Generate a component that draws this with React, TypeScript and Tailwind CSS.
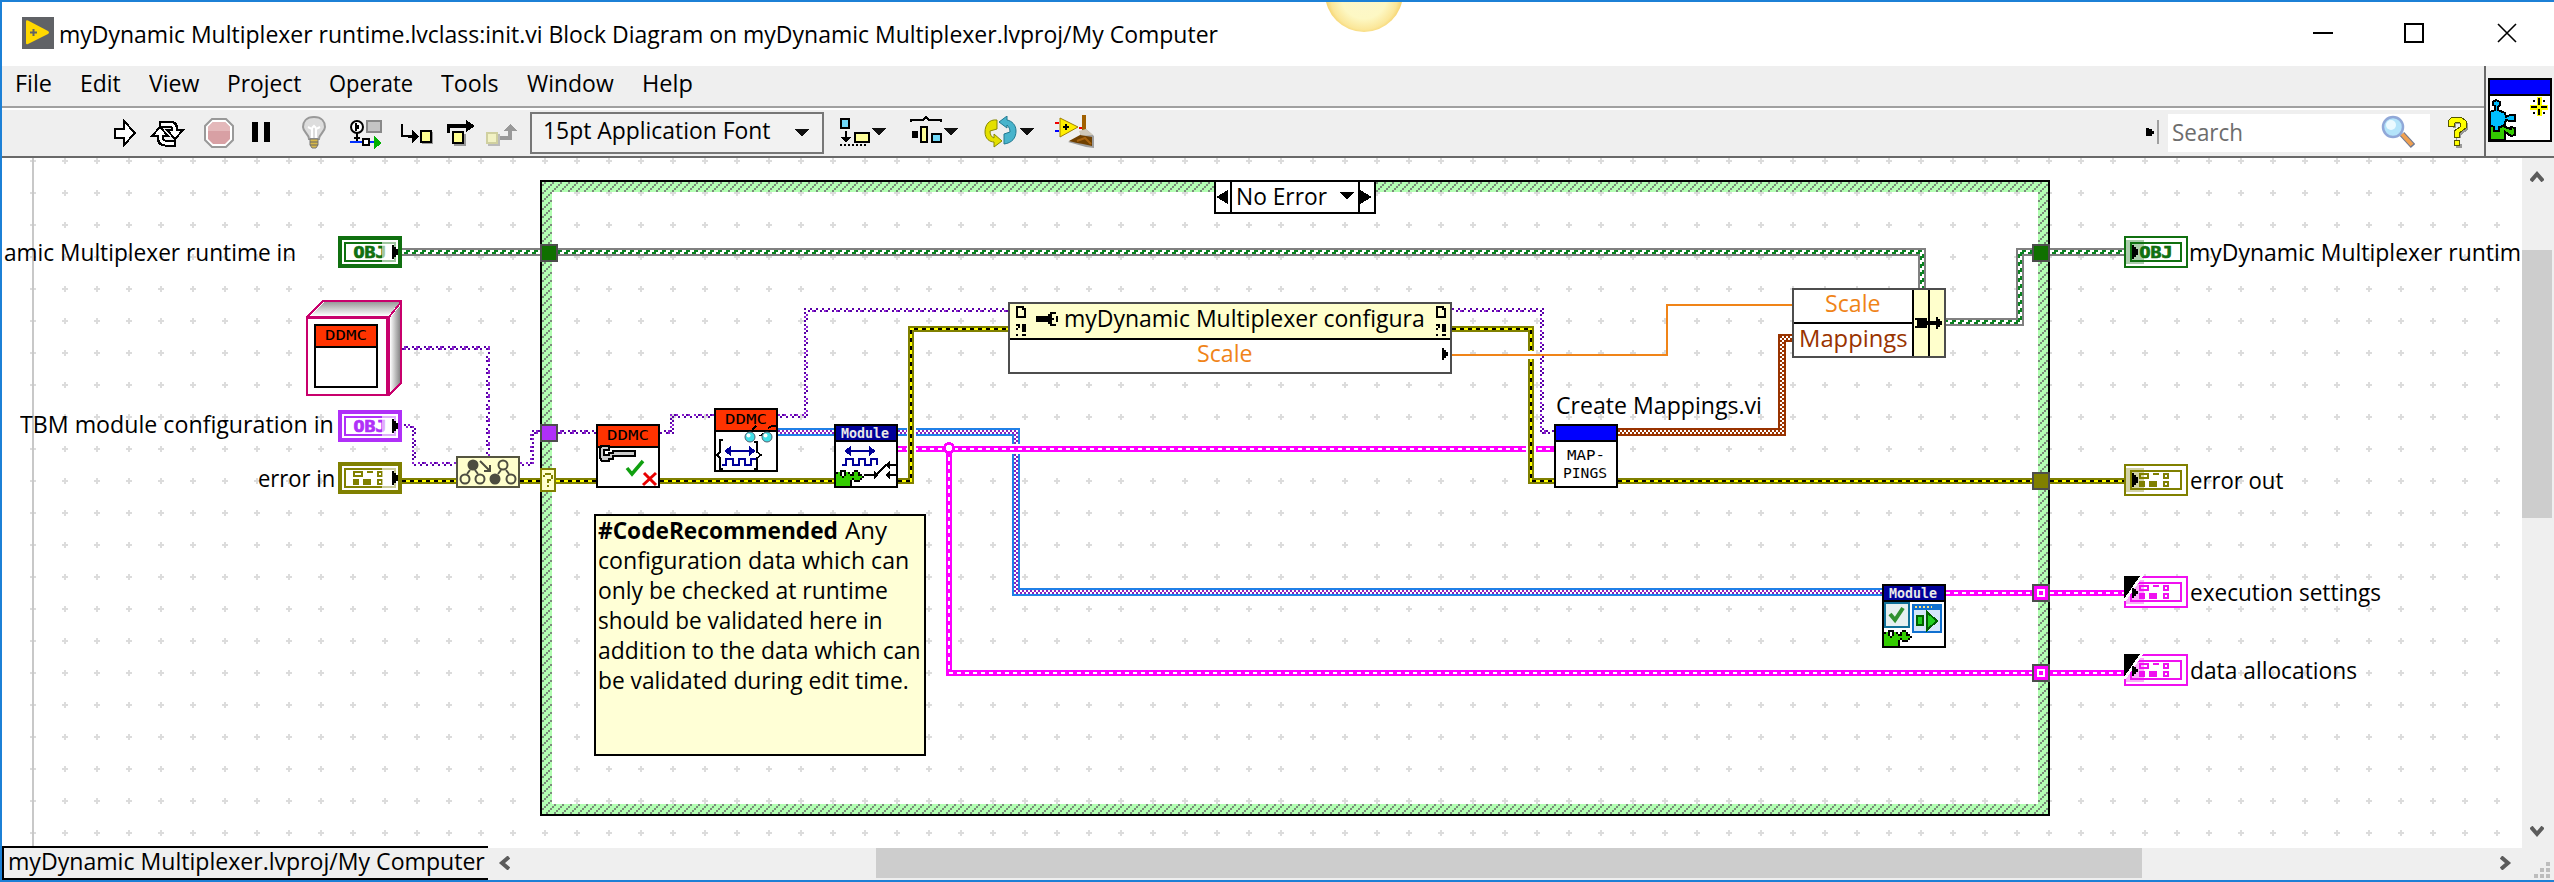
import { useLayoutEffect, useRef } from "react";
import type { ReactNode } from "react";

/* Text squeezed or stretched to the width of its box. */
function Fit({ className = "", children }: { className?: string; children: ReactNode }) {
  const box = useRef<HTMLSpanElement>(null);
  const text = useRef<HTMLSpanElement>(null);
  useLayoutEffect(() => {
    if (box.current && text.current) {
      const k = box.current.clientWidth / text.current.offsetWidth;
      text.current.style.transform = `scaleX(${k})`;
    }
  });
  return (
    <span ref={box} className={`block h-[30px] whitespace-nowrap text-[24px] leading-[28px] ${className}`}>
      <span ref={text} className="inline-block origin-left">{children}</span>
    </span>
  );
}

/* Small bitmap drawing: one character per pixel. */
const INK: Record<string, string> = {
  "#": "#000000", g: "#33cc00", w: "#ffffff",
};
function Bits({ x, y, rows, ink, size = 2 }: { x: number; y: number; rows: string[]; ink?: string; size?: number }) {
  return (
    <g transform={`translate(${x} ${y}) scale(${size})`}>
      {rows.flatMap((row, j) =>
        [...row].map((c, i) => (c === " " || c === "." ? null : <rect key={`${i}-${j}`} x={i} y={j} width="1" height="1" fill={ink ?? INK[c]} />)),
      )}
    </g>
  );
}

const PUZZLE = [
  "#  ###    ##   ",
  "##g#w#g# #gg#  ",
  "#gg#w#gg##gg## ",
  "#ggg#ggggggggg#",
  "#gggggggg#ggg# ",
  "#ggggggg# ###  ",
  "#ggggggg#      ",
  "#ggggggg#      ",
];

const DATA = [
  ".ooooo..ooo..ooo..",
  ".o...o.......o.o..",
  ".ooooo.......ooo..",
  "..................",
  ".ooo..oooo...ooo..",
  ".ooo..oooo...o.o..",
  ".ooo..oooo...ooo..",
];

function Terminal({ x, y, color, kind, side, flag }: { x: number; y: number; color: string; kind: "obj" | "data"; side: "in" | "out"; flag?: boolean }) {
  const input = side === "in";
  const b = input ? 4 : 2;
  return (
    <g transform={`translate(${x} ${y})`}>
      <rect x={b / 2} y={b / 2} width={64 - b} height={32 - b} fill="#fff" stroke={color} strokeWidth={b} />
      <rect x="7" y="7" width="50" height="18" fill="#fff" stroke={color} strokeWidth="2" />
      {kind === "obj" ? (
        <text x="15.500" y="21.500" fontSize="15" fontWeight="700" textLength="33" lengthAdjust="spacingAndGlyphs" fill={color} stroke={color} strokeWidth=".7" className="font-['DejaVu_Sans_Mono',monospace]">OBJ</text>
      ) : (
        <Bits x={13} y={9} rows={DATA} ink={color} />
      )}
      {input ? (
        <>
          <rect x="44" y="4" width="16" height="24" fill="#fff" opacity=".6" />
          <path d="M54 9h2v2h2v2h2v6h-2v2h-2v2h-2z" fill="#000" />
        </>
      ) : (
        <>
          <rect x="2" y="4" width="18" height="24" fill={color} opacity=".35" />
          {!flag && <path d="M8 9h2v2h2v2h2v6h-2v2h-2v2h-2z" fill="#000" />}
        </>
      )}
      {flag && (
        <>
          <path d="M0 0H19L2 25H0Z" fill="#fff" />
          <path d="M0 0H16L0 23Z" fill="#000" />
          <path d="M8 12h2v1h2v2h2v3h-2v2h-2v2h-2z" fill="#000" />
        </>
      )}
    </g>
  );
}

function Tunnel({ x, y, fill, hollow }: { x: number; y: number; fill: string; hollow?: boolean }) {
  return (
    <g>
      <rect x={x + 1} y={y + 1} width="16" height="16" fill={fill} stroke="#4d4d4d" strokeWidth="2" />
      {hollow && <rect x={x + 6} y={y + 6} width="6" height="6" fill={fill} stroke="#fff" strokeWidth="2" />}
    </g>
  );
}

function PurpleWire({ d }: { d: string }) {
  return <path d={d} fill="none" stroke="url(#violet)" strokeWidth="4" />;
}
function ErrorWire({ d }: { d: string }) {
  return (
    <g fill="none">
      <path d={d} stroke="#808000" strokeWidth="6" />
      <path d={d} stroke="#ffff00" strokeWidth="2" />
      <path d={d} stroke="#000" strokeWidth="2" strokeDasharray="4 4" />
    </g>
  );
}
function ClusterWire({ d }: { d: string }) {
  return (
    <g fill="none">
      <path d={d} stroke="#ff00ff" strokeWidth="6" />
      <path d={d} stroke="#fff" strokeWidth="2" strokeDasharray="4 4" />
    </g>
  );
}
function BandWire({ d, edge, fill }: { d: string; edge: string; fill: string }) {
  return (
    <g fill="none">
      <path d={d} stroke={edge} strokeWidth="8" />
      <path d={d} stroke="#fff" strokeWidth="4" />
      <path d={d} stroke={fill} strokeWidth="4" />
    </g>
  );
}

function SubVi({ x, y, band, bandHeight, label, labelColor, children }: { x: number; y: number; band: string; bandHeight: number; label?: string; labelColor?: string; children?: ReactNode }) {
  const ddmc = label === "DDMC";
  return (
    <g transform={`translate(${x} ${y})`}>
      <rect x="1" y="1" width="62" height="62" fill="#fff" stroke="#000" strokeWidth="2" />
      <rect x="2" y="2" width="60" height={bandHeight} fill={band} />
      <rect x="2" y={bandHeight + 2} width="60" height="2" fill="#000" />
      {label && (
        <text x={ddmc ? 11 : 7} y={ddmc ? 16 : 14} fontSize="14" fontWeight={ddmc ? 400 : 700} textLength={ddmc ? 42 : 48} lengthAdjust="spacingAndGlyphs" fill={labelColor} className="font-['DejaVu_Sans_Mono',monospace]">{label}</text>
      )}
      {children}
    </g>
  );
}

function Pulse({ x, y }: { x: number; y: number }) {
  return (
    <g transform={`translate(${x} ${y})`} fill="none" stroke="#000099" strokeWidth="2">
      <path d="M4 5H32" />
      <path d="M8 0V10L1 5ZM26 0V10L33 5Z" fill="#000099" stroke="none" />
      <path d="M-1 19H3V13H10V19H16V13H22V19H28V13H34V19" />
    </g>
  );
}

function Diagram() {
  return (
    <svg className="absolute inset-0" width="2520" height="690" viewBox="2 158 2520 690" shapeRendering="crispEdges">
      <defs>
        <pattern id="grid" x="17" y="209" width="32" height="32" patternUnits="userSpaceOnUse">
          <path d="M13 15h6v2h-6zM15 13h2v6h-2z" fill="#dcdcdc" />
        </pattern>
        <pattern id="hatch" width="8" height="8" patternUnits="userSpaceOnUse">
          <rect width="8" height="8" fill="#b3ffb3" />
          <path d="M6 0h2v2h-2zM4 2h2v2h-2zM2 4h2v2h-2zM0 6h2v2h-2z" fill="#7a8c7a" />
        </pattern>
        <pattern id="object" width="8" height="8" patternUnits="userSpaceOnUse">
          <path d="M0 0h4v2h-4zM6 2h2v2h-2zM0 2h2v2h-2zM4 4h4v2h-4zM2 6h4v2h-4z" fill="#0a8020" />
        </pattern>
        <pattern id="blueCheck" width="4" height="4" patternUnits="userSpaceOnUse">
          <path d="M0 0h2v2h-2zM2 2h2v2h-2z" fill="#8a20c0" />
        </pattern>
        <pattern id="brownCheck" width="4" height="4" patternUnits="userSpaceOnUse">
          <path d="M0 0h2v2h-2zM2 2h2v2h-2z" fill="#993300" />
        </pattern>
        <pattern id="violet" width="12" height="12" patternUnits="userSpaceOnUse">
          <path d="M0 0h2v2h-2zM4 2h2v2h-2zM8 4h2v2h-2zM2 6h2v2h-2zM6 8h2v2h-2zM10 10h2v2h-2zM6 0h2v2h-2zM10 2h2v2h-2zM0 8h2v2h-2zM4 10h2v2h-2z" fill="#5a00a8" />
          <path d="M2 2h2v2h-2zM4 6h2v2h-2zM10 6h2v2h-2zM8 10h2v2h-2zM0 4h2v2h-2zM8 0h2v2h-2z" fill="#8a20d0" />
        </pattern>
        <linearGradient id="cubeTop" x1="0" y1="0" x2="0" y2="1"><stop offset="0" stopColor="#999" /><stop offset="1" stopColor="#fff" /></linearGradient>
        <linearGradient id="cubeSide" x1="0" y1="0" x2="1" y2="0"><stop offset="0" stopColor="#fff" /><stop offset="1" stopColor="#888" /></linearGradient>
      </defs>

      <rect x="30" y="158" width="2480" height="690" fill="url(#grid)" />
      <rect x="32" y="158" width="2" height="690" fill="#c8c8c8" />

      {/* case structure */}
      <path d="M540 180H2050V816H540ZM542 182V814H2048V182Z" fill="#000" fillRule="evenodd" />
      <path d="M542 182H2048V814H542ZM552 192V804H2038V192Z" fill="url(#hatch)" fillRule="evenodd" />
      <rect x="1215" y="181" width="160" height="32" fill="#fff" stroke="#000" strokeWidth="2" />
      <path d="M1230 182h2v30h-2zM1358 182h2v30h-2zM1216 197L1228 190V204ZM1372 197L1360 190V204ZM1340 192H1354L1347 200Z" fill="#000" />

      {/* wires */}
      <BandWire d="M402 252H1922V288" edge="#808080" fill="url(#object)" />
      <BandWire d="M1946 322H2020V252H2124" edge="#808080" fill="url(#object)" />
      <PurpleWire d="M402 348H488V456" />
      <PurpleWire d="M402 426H414V464H456" />
      <PurpleWire d="M520 464H532V432H540" />
      <PurpleWire d="M558 432H596" />
      <PurpleWire d="M660 432H672V416H714" />
      <PurpleWire d="M778 416H806V310H1008" />
      <PurpleWire d="M1452 310H1542V432H1554" />
      <BandWire d="M778 432H834" edge="#2080e8" fill="url(#blueCheck)" />
      <BandWire d="M898 432H1016V592H1882" edge="#2080e8" fill="url(#blueCheck)" />
      <rect x="1010" y="444" width="12" height="10" fill="#fff" />
      <ClusterWire d="M898 449H1554" />
      <ClusterWire d="M949 449V673H2124" />
      <ClusterWire d="M1946 593H2124" />
      <rect x="907" y="426" width="9" height="28" fill="#fff" />
      <rect x="1526" y="444" width="10" height="10" fill="#fff" />
      <circle cx="949" cy="448" r="4.500" fill="#fff" stroke="#ff00ff" strokeWidth="3" />
      <ErrorWire d="M402 481H456" />
      <ErrorWire d="M520 481H596" />
      <ErrorWire d="M660 481H834" />
      <ErrorWire d="M898 481H911V329H1008" />
      <ErrorWire d="M1452 329H1531V481H1554" />
      <ErrorWire d="M1618 481H2124" />
      <rect x="1526" y="351" width="10" height="8" fill="#fff" />
      <path d="M1452 355H1667V305H1792" fill="none" stroke="#f08418" strokeWidth="2" />
      <BandWire d="M1618 432H1782V338H1792" edge="#993300" fill="url(#brownCheck)" />

      {/* tunnels */}
      <Tunnel x={540} y={244} fill="#107000" />
      <Tunnel x={2032} y={244} fill="#107000" />
      <Tunnel x={540} y={424} fill="#b030f8" />
      <Tunnel x={2032} y={472} fill="#808000" />
      <Tunnel x={2032} y={584} fill="#ff00ff" hollow />
      <Tunnel x={2032} y={664} fill="#ff00ff" hollow />
      <rect x="541" y="469" width="14" height="22" fill="#ffffcc" stroke="#808000" strokeWidth="2" />
      <Bits x={543} y={473} ink="#808000" rows={[" ### ", "#   #", "    #", "  ## ", "  #  ", "     ", "  #  "]} />

      {/* terminals */}
      <Terminal x={338} y={236} color="#107010" kind="obj" side="in" />
      <Terminal x={338} y={410} color="#b030f8" kind="obj" side="in" />
      <Terminal x={338} y={462} color="#808000" kind="data" side="in" />
      <Terminal x={2124} y={236} color="#107010" kind="obj" side="out" />
      <Terminal x={2124} y={464} color="#808000" kind="data" side="out" />
      <Terminal x={2124} y={576} color="#f010f0" kind="data" side="out" flag />
      <Terminal x={2124} y={654} color="#f010f0" kind="data" side="out" flag />

      {/* class constant */}
      <path d="M307 317L323 301H401V383L388 395Z" fill="#fff" />
      <path d="M310 316L324 302H400L388 316Z" fill="url(#cubeTop)" />
      <path d="M390 318L400 306V382L390 394Z" fill="url(#cubeSide)" />
      <path d="M307 317L323 301H401V383L389 395H307ZM307 317H389V395M389 317L401 302" fill="none" stroke="#c8006c" strokeWidth="2" />
      <path d="M308 318H387V394" fill="none" stroke="#c8006c" strokeWidth="3" />
      <rect x="308" y="319" width="78" height="75" fill="#fff" />
      <SubVi x={314} y={324} band="#ff3300" bandHeight={20} label="DDMC" labelColor="#000" />

      {/* merge node */}
      <rect x="457" y="457" width="62" height="30" fill="#ffffcc" stroke="#555540" strokeWidth="2" />
      <g shapeRendering="auto" fill="none" stroke="#4d4d40" strokeWidth="2">
        <circle cx="473" cy="465" r="4.500" fill="#4d4d40" />
        <circle cx="465" cy="479" r="4.500" />
        <circle cx="480" cy="479" r="4.500" />
        <circle cx="495" cy="479" r="4.500" fill="#4d4d40" />
        <circle cx="503" cy="465" r="4.500" />
        <circle cx="511" cy="479" r="4.500" />
        <path d="M470 470L467 474M475 470L478 474M501 470L498 474M506 470L509 474M480 461L490 471M490 465V471H484" />
      </g>

      <SubVi x={596} y={424} band="#ff3300" bandHeight={20} label="DDMC" labelColor="#000">
        <path d="M5 22h8v4h-5v5h5v-2h4v-2h22v5h-22v3h-4v2H6l-2-3v-9z" fill="#ccc" stroke="#000" strokeWidth="2" />
        <path d="M31 44L36 50L47 37" fill="none" stroke="#10a010" strokeWidth="3.500" shapeRendering="auto" />
        <path d="M48 49L60 61M60 49L47 61" fill="none" stroke="#e80000" strokeWidth="3" shapeRendering="auto" />
      </SubVi>
      <SubVi x={714} y={408} band="#ff3300" bandHeight={20} label="DDMC" labelColor="#000">
        <Pulse x={9} y={38} />
        <path d="M9 32H6V44L3 47L6 50V61H9M40 34H43V44L47 47L43 50V61H40M38 22L42 18M46 28Q50 23 54 28M54 20L58 18H62" fill="none" stroke="#000" strokeWidth="1.500" />
        <g shapeRendering="auto"><circle cx="36" cy="29" r="5" fill="#40e0e8" stroke="#506070" /><circle cx="53" cy="29" r="5" fill="#40e0e8" stroke="#506070" /><circle cx="34.500" cy="27.500" r="2" fill="#fff" /><circle cx="51.500" cy="27.500" r="2" fill="#fff" /></g>
      </SubVi>
      <SubVi x={834} y={424} band="#000099" bandHeight={14} label="Module" labelColor="#e8e8e8">
        <Pulse x={9} y={22} />
        <Bits x={0} y={46} rows={PUZZLE} />
        <path d="M30 51H42L52 41H62M52 51H62" fill="none" stroke="#000" strokeWidth="2" />
        <path d="M40 47V55L45 51ZM51 41L56 37V45ZM51 51L56 47V55Z" fill="#000" />
      </SubVi>
      <SubVi x={1554} y={424} band="#0000ff" bandHeight={14}>
        <g fontSize="14" className="font-['DejaVu_Sans_Mono',monospace]">
          <text x="13" y="36" textLength="38" lengthAdjust="spacingAndGlyphs">MAP-</text>
          <text x="9" y="54" textLength="44" lengthAdjust="spacingAndGlyphs">PINGS</text>
        </g>
      </SubVi>
      <SubVi x={1882} y={584} band="#000099" bandHeight={14} label="Module" labelColor="#e8e8e8">
        <rect x="3" y="19" width="24" height="24" fill="#e6f0f0" stroke="#107098" strokeWidth="2" />
        <path d="M8 30L13 36L21 24" fill="none" stroke="#309030" strokeWidth="4" shapeRendering="auto" />
        <rect x="31" y="21" width="28" height="27" fill="#d4e6fa" stroke="#1070d0" strokeWidth="2" />
        <rect x="30" y="20" width="30" height="6" fill="#1070d0" />
        <path d="M33 23H50" stroke="#ffe080" strokeWidth="2" strokeDasharray="2 2" />
        <rect x="35" y="32" width="6" height="9" fill="#20d020" stroke="#006000" strokeWidth="2" />
        <path d="M45 28V46L55 37Z" fill="#20d020" stroke="#006000" strokeWidth="2" />
        <Bits x={0} y={46} rows={PUZZLE} />
      </SubVi>

      {/* property node */}
      <rect x="1009" y="303" width="442" height="70" fill="#fff" stroke="#4d4d4d" strokeWidth="2" />
      <rect x="1010" y="304" width="440" height="34" fill="#ffffcc" />
      <rect x="1010" y="338" width="440" height="2" fill="#000" />
      <path d="M1442 348h2v2h2v2h2v4h-2v2h-2v2h-2z" fill="#000" />
      {[1016, 1436].map((x) => (
        <g key={x}>
          <Bits x={x} y={306} rows={["#### ", "#  ##", "#   #", "#   #", "#   #", "#####"]} />
          <Bits x={x} y={324} rows={["## ##", " # ##", "#  ##", "   ##", "     ", "#  ##"]} />
        </g>
      ))}
      <Bits x={1036} y={312} rows={["       ### ", "      ##   ", "########  #", "######### #", "########  #", "      ##   ", "       ### "]} />

      {/* bundle node */}
      <rect x="1793" y="289" width="152" height="68" fill="#fff" stroke="#4d4d4d" strokeWidth="2" />
      <rect x="1914" y="290" width="30" height="66" fill="#ffffcc" />
      <path d="M1794 322h118v2h-118zM1912 290h2v66h-2zM1928 290h2v66h-2z" fill="#000" />
      <path d="M1915 318h4v10h-4v-2h2v-6h-2zM1918 318h9v3h9v-4h2v2h2v2h2v4h-2v2h-2v2h-2v-4h-9v3h-9z" fill="#000" />
    </svg>
  );
}

function Down({ className = "" }: { className?: string }) {
  return (
    <svg className={className} width="14" height="8" viewBox="0 0 14 8" shapeRendering="crispEdges">
      <path d="M0 0H14L7 8Z" fill="#111" />
    </svg>
  );
}

function Toolbar() {
  return (
    <div className="flex h-[46px] items-center bg-[#efefef] pb-[2px]">
      <svg className="ml-[110px]" width="410" height="40" viewBox="112 112 410 40" shapeRendering="crispEdges">
        <path d="M115 129H124V121L135 133L124 145V138H115Z" fill="#fff" stroke="#000" strokeWidth="2" />
        {/* run continuously */}
        <g fill="none">
          <path d="M159 124H170Q175 124 175 131" stroke="#000" strokeWidth="7" />
          <path d="M167 130H183L175 139Z" fill="#fff" stroke="#000" strokeWidth="2" />
          <path d="M161 124H170Q175 124 175 133" stroke="#fff" strokeWidth="3" />
          <path d="M176 143H165Q160 143 160 136" stroke="#000" strokeWidth="7" />
          <path d="M152 136H168L160 127Z" fill="#fff" stroke="#000" strokeWidth="2" />
          <path d="M174 143H165Q160 143 160 133" stroke="#fff" strokeWidth="3" />
        </g>
        {/* abort */}
        <g shapeRendering="auto">
          <path d="M212 119H226L233 126V140L226 147H212L205 140V126Z" fill="#fff" stroke="#999" strokeWidth="2" />
          <path d="M213 122H225L230 127V139L225 144H213L208 139V127Z" fill="#d8a0a4" />
          <path d="M213 122H225L230 127V131H208V127Z" fill="#e4b8ba" />
        </g>
        <path d="M252 122h6v20h-6zM264 122h6v20h-6z" fill="#000" />
        {/* highlight execution */}
        <g shapeRendering="auto">
          <path d="M314 117C306 117 303 122 303 127C303 132 309 134 309 139H319C319 134 325 132 325 127C325 122 322 117 314 117Z" fill="#ddd" stroke="#999" strokeWidth="2" />
          <path d="M308 127L312 129V138M320 127L316 129V138M312 128L314 126L316 128" fill="none" stroke="#fff" strokeWidth="2" />
          <path d="M310 139H318V145L316 148H312L310 145Z" fill="#d8b848" stroke="#777" strokeWidth="1" />
          <path d="M310 142H318M310 145H318" stroke="#666" strokeWidth="1" />
        </g>
        {/* retain wire values */}
        <circle cx="357" cy="127" r="6" fill="#fff" stroke="#000" strokeWidth="2" shapeRendering="auto" />
        <path d="M355 123h2v2h2v4h-2v2h-2zM356 133h2v6h-2zM354 137h6v2h-2v2h-2v-2h-2z" fill="#000" />
        <rect x="367" y="121" width="14" height="11" fill="#c4c4c4" stroke="#888" strokeWidth="2" />
        <path d="M350 142H376" stroke="#0030ff" strokeWidth="2" />
        <rect x="363" y="139" width="6" height="6" fill="#fff" stroke="#000" strokeWidth="2" />
        <path d="M374 136L382 143L374 149Z" fill="#00b000" />
        {/* step into */}
        <path d="M402 124V136H412" fill="none" stroke="#000" strokeWidth="2" />
        <path d="M408 135H412V130L419 136L412 143V138H408Z" fill="#000" />
        <rect x="422" y="132" width="11" height="12" fill="#999" />
        <rect x="421" y="131" width="10" height="11" fill="#ffff90" stroke="#000" strokeWidth="2" />
        {/* step over */}
        <path d="M447 133V124H466V120L475 126L466 132V128H450V133Z" fill="#000" />
        <rect x="454" y="134" width="12" height="12" fill="#999" />
        <rect x="453" y="132" width="10" height="11" fill="#ffff90" stroke="#000" strokeWidth="2" />
        {/* step out */}
        <rect x="488" y="134" width="12" height="12" fill="#bbb" />
        <rect x="487" y="133" width="10" height="10" fill="#f2f2c4" stroke="#d0d0a0" strokeWidth="2" />
        <path d="M500 139V136H508V131H503L510 124L517 131H512V140H500Z" fill="#999" />
      </svg>
      <div className="ml-[8px] mt-[2px] flex h-[42px] w-[294px] items-center border-2 border-[#777777] bg-[#f2f2f2] pl-[11px]">
        <Fit className="-mt-[4px] w-[228px]">15pt Application Font</Fit>
        <Down className="ml-[24px]" />
      </div>
      <svg className="ml-[16px]" width="31" height="28" viewBox="0 0 31 28" shapeRendering="crispEdges">
        <rect x="1" y="1" width="8" height="9" fill="#70d8f8" stroke="#000" strokeWidth="2" />
        <path d="M5 13h2v6h4l-5 6l-5-6h4z" fill="#000" />
        <rect x="15" y="15" width="14" height="9" fill="#ffff99" stroke="#000" strokeWidth="2" />
        <path d="M0 27H28" stroke="#000" strokeWidth="2" strokeDasharray="2 2" />
      </svg>
      <Down className="ml-px" />
      <svg className="ml-[24px] -mt-[4px]" width="34" height="28" viewBox="0 0 34 28" shapeRendering="crispEdges">
        <path d="M1 6V4H13L16 1L19 4H31V6" fill="none" stroke="#000" strokeWidth="2" />
        <rect x="2" y="15" width="6" height="7" fill="#000" />
        <rect x="11" y="11" width="6" height="15" fill="#ffff99" stroke="#000" strokeWidth="2" />
        <rect x="22" y="18" width="9" height="8" fill="#70d8f8" stroke="#000" strokeWidth="2" />
      </svg>
      <Down />
      <svg className="ml-[26px]" width="34" height="32" viewBox="0 0 34 32">
        <path d="M13 4C5 3 1 9 1 16C1 23 6 26 10 26V31L18 25L10 18V22C7 21 6 18 6 15L13 13Z" fill="#e4e000" stroke="#888800" />
        <path d="M20 28C28 27 32 22 32 15C32 9 28 5 23 4V0L15 6L23 12V9C25 11 26 13 26 16L20 18Z" fill="#48b4cc" stroke="#207890" />
      </svg>
      <Down className="ml-[2px]" />
      <svg className="ml-[21px]" width="44" height="34" viewBox="0 0 44 34">
        <path d="M0 8H4M24 13H28" stroke="#f00000" strokeWidth="2" />
        <path d="M0 16H4" stroke="#0000ff" strokeWidth="2" />
        <path d="M5 3L23 12L5 22Z" fill="#ffee00" stroke="#a08000" />
        <path d="M8 12H14M11 9V15" stroke="#000" strokeWidth="2" />
        <path d="M27 0H31V16H27Z" fill="#a06000" />
        <path d="M25 17L31 14L39 21V33L31 32L13 27L25 21Z" fill="#888" opacity=".8" />
        <path d="M24 16L31 14L38 20L26 21Z" fill="#d0c8b8" />
        <path d="M14 26L25 20L37 22V31L28 29L22 28Z" fill="#704000" />
        <path d="M22 26L30 23L36 29" fill="none" stroke="#a86410" strokeWidth="2" />
      </svg>
      <svg className="ml-auto" width="16" height="24" viewBox="0 0 16 24" shapeRendering="crispEdges">
        <path d="M2 8h3v1h3v2h2v3h-2v2h-6z" fill="#000" />
        <path d="M13 0h2v24h-2z" fill="#a0a0a0" />
      </svg>
      <div className="ml-[8px] mt-[2px] flex h-[38px] w-[262px] items-center justify-between bg-white pl-[4px] pr-[15px] text-[#6d6d6d]">
        <Fit className="w-[71px]">Search</Fit>
        <svg className="-mt-[2px]" width="34" height="34" viewBox="0 0 34 34">
          <path d="M21 19L32 31" stroke="#707890" strokeWidth="6" />
          <path d="M21 19L31 30" stroke="#f0a050" strokeWidth="4" />
          <circle cx="12" cy="12" r="10" fill="#b4e4fa" stroke="#90a8d8" strokeWidth="2.500" />
          <circle cx="10" cy="10" r="5" fill="#ecfaff" />
        </svg>
      </div>
      <svg className="ml-[17px] mr-[14px]" width="23" height="32" viewBox="0 0 23 32" shapeRendering="crispEdges">
        <path d="M3 11V7L7 3H16L21 7V14L14 19V22H10V28H15V32H9V17L16 12V8H9V12Z" fill="#999" />
        <path d="M1 10V5L5 1H14L19 5V12L12 17V21H7V15L13 11V7L11 6H9L7 8V10Z" fill="#ffff00" stroke="#555500" strokeWidth="1" />
        <path d="M7 24H12V29H7Z" fill="#ffff00" stroke="#555500" strokeWidth="1" />
      </svg>
    </div>
  );
}

function ViIcon() {
  return (
    <svg width="64" height="64" viewBox="0 0 64 64" shapeRendering="crispEdges">
      <rect x="1" y="1" width="62" height="62" fill="#fff" stroke="#000" strokeWidth="2" />
      <rect x="2" y="2" width="60" height="14" fill="#0000ff" />
      <rect x="2" y="16" width="60" height="2" fill="#000" />
      <path d="M2 47H17V49L23 51V49L27 50V57L23 58L17 54V62H2Z" fill="#33cc00" stroke="#000" strokeWidth="2" />
      <path d="M2 34L7 32V28L5 27V24L8 22L12 24V27L10 29V32L17 35L18 39L22 37L27 37V43L22 43L18 42L16 48L11 49V53H6V49L2 47Z" fill="#00bfff" stroke="#000" strokeWidth="2" />
      <rect x="0" y="18" width="2" height="46" fill="#000" />
      <path d="M51 19V38M42 29H60" stroke="#ffff00" strokeWidth="5" />
      <path d="M50 20h2v7h-2zM50 31h2v6h-2zM43 28h6v2h-6zM53 28h6v2h-6zM45 22h2v2h-2zM55 22h2v2h-2zM45 34h2v2h-2zM55 34h2v2h-2z" fill="#000" />
    </svg>
  );
}

export default function App() {
  return (
    <div className="relative flex h-[882px] w-[2554px] flex-col overflow-hidden border-y-2 border-l-2 border-[#1c80d6] bg-white font-['Open_Sans',sans-serif] text-black">
      <header className="flex h-[64px] shrink-0 items-center">
        <svg className="-mt-[2px] ml-[20px]" width="32" height="32" viewBox="0 0 32 32">
          <rect width="32" height="32" fill="#606266" />
          <path d="M4 4.500Q4 2.500 6 3.500L26 14Q28 15.500 26 17L6 27Q4 28 4 26Z" fill="#ffd800" />
          <path d="M8 15.500H15M11.500 12V19" stroke="#606266" strokeWidth="2" />
        </svg>
        <Fit className="ml-[5px] mt-[1px] w-[1159px]">myDynamic Multiplexer runtime.lvclass:init.vi Block Diagram on myDynamic Multiplexer.lvproj/My Computer</Fit>
        <svg className="-mt-[3px] ml-auto mr-[35px]" width="206" height="22" viewBox="0 0 206 22">
          <path d="M0 10h20v2h-20z" fill="#000" />
          <rect x="92" y="2" width="18" height="18" fill="none" stroke="#000" strokeWidth="2" shapeRendering="crispEdges" />
          <path d="M185 2L203 20M203 2L185 20" stroke="#000" strokeWidth="1.600" />
        </svg>
      </header>
      <svg className="absolute -top-[2px] left-[1322px]" width="80" height="34" viewBox="0 0 80 34">
        <defs>
          <radialGradient id="glow" gradientUnits="userSpaceOnUse" cx="40" cy="-4" r="38">
            <stop offset="0" stopColor="#fcf6cc" />
            <stop offset=".6" stopColor="#fdf8c4" />
            <stop offset=".88" stopColor="#fbe79a" />
            <stop offset="1" stopColor="#f6d470" />
          </radialGradient>
        </defs>
        <circle cx="40" cy="-7" r="39" fill="url(#glow)" />
        <rect x="2" y="0" width="76" height="2" fill="#88b8b0" />
      </svg>

      <div className="flex h-[92px] shrink-0 border-b-2 border-[#696969]">
        <div className="flex w-[2482px] flex-col">
          <nav className="flex h-[40px] items-center gap-7 bg-[#efefef] pb-[5px] pl-[13px]">
            <Fit className="w-[37px]">File</Fit>
            <Fit className="w-[41px]">Edit</Fit>
            <Fit className="w-[50px]">View</Fit>
            <Fit className="w-[74px]">Project</Fit>
            <Fit className="w-[84px]">Operate</Fit>
            <Fit className="w-[58px]">Tools</Fit>
            <Fit className="w-[87px]">Window</Fit>
            <Fit className="w-[51px]">Help</Fit>
          </nav>
          <div className="h-[4px] border-t-2 border-[#a0a0a0] bg-white" />
          <Toolbar />
        </div>
        <div className="flex w-[70px] border-l-2 border-[#696969] bg-[#efefef] pl-[2px] pt-[12px]">
          <ViIcon />
        </div>
      </div>

      <div className="flex h-[690px] shrink-0">
        <main className="relative w-[2520px] overflow-hidden bg-white">
          <Diagram />
          <Fit className="absolute left-[2px] top-[80px] w-[292px]">amic Multiplexer runtime in</Fit>
          <Fit className="absolute left-[18px] top-[252px] w-[314px]">TBM module configuration in</Fit>
          <Fit className="absolute left-[256px] top-[306px] w-[77px]">error in</Fit>
          <Fit className="absolute left-[2187px] top-[80px] w-[332px]">myDynamic Multiplexer runtim</Fit>
          <Fit className="absolute left-[2188px] top-[308px] w-[93px]">error out</Fit>
          <Fit className="absolute left-[2188px] top-[420px] w-[191px]">execution settings</Fit>
          <Fit className="absolute left-[2188px] top-[498px] w-[167px]">data allocations</Fit>
          <Fit className="absolute left-[1234px] top-[24px] w-[91px]">No Error</Fit>
          <Fit className="absolute left-[1062px] top-[146px] w-[361px]">myDynamic Multiplexer configura</Fit>
          <Fit className="absolute left-[1195px] top-[181px] w-[56px] text-[#f08418]">Scale</Fit>
          <Fit className="absolute left-[1823px] top-[131px] w-[56px] text-[#f08418]">Scale</Fit>
          <Fit className="absolute left-[1797px] top-[166px] w-[109px] text-[#993300]">Mappings</Fit>
          <Fit className="absolute left-[1554px] top-[233px] w-[206px]">Create Mappings.vi</Fit>
          <div className="absolute left-[592px] top-[356px] h-[242px] w-[332px] border-2 border-black bg-[#ffffd6] pl-[2px]">
            <div className="flex gap-[7px]">
              <Fit className="w-[240px] font-bold">#CodeRecommended</Fit>
              <Fit className="w-[42px]">Any</Fit>
            </div>
            <Fit className="w-[311px]">configuration data which can</Fit>
            <Fit className="w-[290px]">only be checked at runtime</Fit>
            <Fit className="w-[285px]">should be validated here in</Fit>
            <Fit className="w-[323px]">addition to the data which can</Fit>
            <Fit className="w-[311px]">be validated during edit time.</Fit>
          </div>
        </main>
        <div className="flex w-[32px] flex-col items-center bg-[#efefef] pr-[2px]">
          <svg className="mt-[12px]" width="14" height="12" viewBox="0 0 14 12"><path d="M1 11L7 4L13 11" fill="none" stroke="#5c5c5c" strokeWidth="4" /></svg>
          <div className="mt-[68px] h-[268px] w-[30px] bg-[#cdcdcd]" />
          <svg className="mb-[10px] mt-auto" width="14" height="12" viewBox="0 0 14 12"><path d="M1 1L7 8L13 1" fill="none" stroke="#5c5c5c" strokeWidth="4" /></svg>
        </div>
      </div>

      <footer className="relative flex h-[32px] shrink-0 items-start bg-[#efefef]">
        <div className="-mt-[2px] flex h-[34px] w-[486px] items-center border-y-2 border-l-2 border-black bg-[#efefef] pb-[3px] pl-[4px]">
          <Fit className="w-[477px]">myDynamic Multiplexer.lvproj/My Computer</Fit>
        </div>
        <svg className="ml-[10px] mt-[8px]" width="12" height="14" viewBox="0 0 12 14"><path d="M11 1L4 7L11 13" fill="none" stroke="#5c5c5c" strokeWidth="4" /></svg>
        <div className="ml-[366px] h-[30px] w-[1266px] bg-[#cdcdcd]" />
        <svg className="ml-auto mr-[22px] mt-[8px]" width="12" height="14" viewBox="0 0 12 14"><path d="M1 1L8 7L1 13" fill="none" stroke="#5c5c5c" strokeWidth="4" /></svg>
        <svg className="mr-[4px] mt-[14px]" width="16" height="16" viewBox="0 0 16 16"><path d="M12 0h4v4h-4zM12 6h4v4h-4zM6 6h4v4h-4zM12 12h4v4h-4zM6 12h4v4h-4zM0 12h4v4h-4z" fill="#bdbdbd" /></svg>
      </footer>
    </div>
  );
}
